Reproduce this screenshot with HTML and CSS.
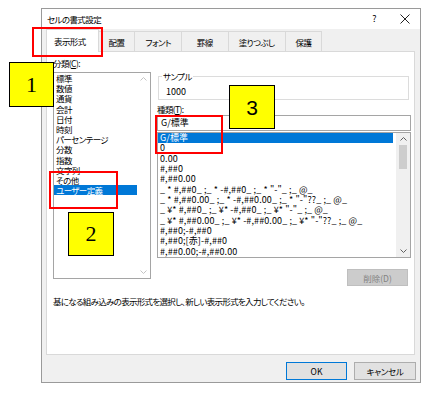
FILE: index.html
```html
<!DOCTYPE html>
<html lang="ja">
<head>
    <meta charset="UTF-8">
    <meta name="viewport" content="width=device-width, initial-scale=1.0">
    <title>セルの書式設定</title>
    <link rel="stylesheet" href="styles.css">
</head>
<body>
    <div class="dialog">
        <div class="titlebar">
            <span class="title">セルの書式設定</span>
            <span class="help">?</span>
            <span class="close">
                <svg width="10" height="10" viewBox="0 0 10 10"><path d="M0.5 0.5 L9.5 9.5 M9.5 0.5 L0.5 9.5" stroke="#222" stroke-width="1" fill="none"/></svg>
            </span>
        </div>

        <div class="tabs">
            <div class="tab active">表示形式</div>
            <div class="tab">配置</div>
            <div class="tab">フォント</div>
            <div class="tab tab-wide">罫線</div>
            <div class="tab">塗りつぶし</div>
            <div class="tab">保護</div>
        </div>

        <div class="panel">
            <div class="cols">
                <div class="col-left">
                    <div class="label">分類(<u>C</u>):</div>
                    <div class="listbox cat-list">
                        <ul class="items">
                            <li>標準</li>
                            <li>数値</li>
                            <li>通貨</li>
                            <li>会計</li>
                            <li>日付</li>
                            <li>時刻</li>
                            <li>パーセンテージ</li>
                            <li>分数</li>
                            <li>指数</li>
                            <li>文字列</li>
                            <li>その他</li>
                            <li class="selected">ユーザー定義</li>
                        </ul>
                        <div class="scroll scroll-off">
                            <div class="arrow"><svg width="7" height="4" viewBox="0 0 7 4"><path d="M0.5 3.5 L3.5 0.5 L6.5 3.5" stroke="#c4c4c4" fill="none"/></svg></div>
                            <div class="track"></div>
                            <div class="arrow"><svg width="7" height="4" viewBox="0 0 7 4"><path d="M0.5 0.5 L3.5 3.5 L6.5 0.5" stroke="#c4c4c4" fill="none"/></svg></div>
                        </div>
                    </div>
                </div>

                <div class="col-right">
                    <fieldset class="sample">
                        <legend>サンプル</legend>
                        <div class="sample-value">1000</div>
                    </fieldset>
                    <div class="label">種類(<u>T</u>):</div>
                    <div class="input">G/標準</div>
                    <div class="listbox fmt-list">
                        <ul class="items">
                            <li class="selected">G/標準</li>
                            <li>0</li>
                            <li>0.00</li>
                            <li>#,##0</li>
                            <li>#,##0.00</li>
                            <li>_ * #,##0_ ;_ * -#,##0_ ;_ * "-"_ ;_ @_</li>
                            <li>_ * #,##0.00_ ;_ * -#,##0.00_ ;_ * "-"??_ ;_ @_</li>
                            <li>_ ¥* #,##0_ ;_ ¥* -#,##0_ ;_ ¥* "-"_ ;_ @_</li>
                            <li>_ ¥* #,##0.00_ ;_ ¥* -#,##0.00_ ;_ ¥* "-"??_ ;_ @_</li>
                            <li>#,##0;-#,##0</li>
                            <li>#,##0;[赤]-#,##0</li>
                            <li>#,##0.00;-#,##0.00</li>
                        </ul>
                        <div class="scroll">
                            <div class="arrow"><svg width="7" height="4" viewBox="0 0 7 4"><path d="M0.5 3.5 L3.5 0.5 L6.5 3.5" stroke="#606060" fill="none"/></svg></div>
                            <div class="track"><div class="thumb"></div></div>
                            <div class="arrow"><svg width="7" height="4" viewBox="0 0 7 4"><path d="M0.5 0.5 L3.5 3.5 L6.5 0.5" stroke="#606060" fill="none"/></svg></div>
                        </div>
                    </div>
                    <div class="btn-row">
                        <button class="btn btn-delete" disabled>削除(D)</button>
                    </div>
                </div>
            </div>
            <p class="desc">基になる組み込みの表示形式を選択し、新しい表示形式を入力してください。</p>
        </div>

        <div class="footer">
            <button class="btn btn-ok">OK</button>
            <button class="btn btn-cancel">キャンセル</button>
        </div>
    </div>

    <!-- 注釈 -->
    <div class="mark mark-tab"></div>
    <div class="mark mark-user"></div>
    <div class="mark mark-type"></div>
    <div class="note note-1">1</div>
    <div class="note note-2">2</div>
    <div class="note note-3">3</div>
</body>
</html>
```

FILE: styles.css
```css
:root {
    --dialog-bg: #f0f0f0;
    --border-light: #d9d9d9;
    --border-field: #a5a5a5;
    --select-color: #0078d7;
    --mark-color: #ff0000;
    --note-color: #ffff00;
}

* {
    margin: 0;
    padding: 0;
    box-sizing: border-box;
}

body {
    position: relative;
    width: 431px;
    height: 397px;
    overflow: hidden;
    background: #ffffff;
    color: #000000;
    font-family: "Noto Sans CJK JP", sans-serif;
    font-size: 8.5px;
    font-feature-settings: "palt";
    letter-spacing: -0.6px;
    line-height: 12px;
}

.dialog {
    margin: 8px 0 0 41px;
    width: 380px;
    height: 375px;
    border: 1px solid #9a9a9a;
    background: var(--dialog-bg);
    display: flex;
    flex-direction: column;
}

.titlebar {
    height: 20px;
    background: #ffffff;
    display: flex;
    align-items: center;
    padding-left: 5px;
}

.title {
    flex: 1;
}

.help,
.close {
    height: 20px;
    display: flex;
    align-items: center;
    justify-content: center;
}

.help {
    width: 30px;
    font-size: 9px;
}

.close {
    width: 31px;
}

.tabs {
    height: 22px;
    display: flex;
    align-items: flex-end;
    padding-left: 4px;
}

.tab {
    height: 20px;
    padding: 0 10px;
    border: 1px solid var(--border-light);
    border-bottom: none;
    margin-left: -1px;
    display: flex;
    align-items: center;
    background: var(--dialog-bg);
}

.tab:first-child {
    margin-left: 0;
}

.tab.active {
    height: 23px;
    margin-bottom: -1px;
    padding: 0 12px 0 7px;
    background: #ffffff;
    position: relative;
    z-index: 1;
}

.tab-wide {
    padding: 0 15px;
}

.panel {
    height: 304px;
    margin: 0 5px 0 4px;
    border: 1px solid var(--border-light);
    background: #ffffff;
    padding: 5px 3px 0 6px;
}

.cols {
    display: grid;
    grid-template-columns: 98px 254px;
    column-gap: 6px;
    align-items: start;
}

.label {
    height: 12px;
}

.listbox {
    display: flex;
    border: 1px solid var(--border-field);
    background: #ffffff;
    overflow: hidden;
}

.items {
    list-style: none;
    flex: 1;
    min-width: 0;
}

.items li {
    white-space: nowrap;
    padding-left: 2px;
}

.items li.selected {
    background: var(--select-color);
    color: #ffffff;
}

.cat-list {
    margin-top: 3px;
    height: 207px;
}

.cat-list .items li {
    line-height: 10.2px;
}

.fmt-list {
    margin-top: 1px;
    height: 126px;
}

.fmt-list .items {
    margin-right: 3px;
    font-size: 9px;
    letter-spacing: 0.1px;
}

.fmt-list .items li {
    line-height: 10.35px;
}

.scroll {
    width: 14px;
    display: flex;
    flex-direction: column;
    background: var(--dialog-bg);
}

.scroll-off {
    width: 13px;
    background: #ffffff;
}

.arrow {
    height: 12px;
    display: flex;
    align-items: center;
    justify-content: center;
}

.track {
    flex: 1;
}

.thumb {
    margin: 0 3px;
    height: 24px;
    background: #cdcdcd;
}

.sample {
    margin-top: 13px;
    width: 251px;
    margin-left: 1px;
    border: 1px solid #dcdcdc;
    padding: 4px 0 1px 7px;
}

.sample legend {
    margin-left: -4px;
    padding: 0 1px;
}

.sample-value {
    line-height: 12px;
    font-size: 9px;
    letter-spacing: 0;
}

.col-right > .label {
    margin-top: 3px;
}

.input {
    height: 16px;
    border: 1px solid var(--border-field);
    padding-left: 3px;
    line-height: 14px;
    font-size: 9px;
    letter-spacing: 0;
}

.btn-row {
    display: flex;
    justify-content: flex-end;
    margin-top: 11px;
    padding-right: 3px;
}

.btn {
    font-family: inherit;
    font-size: 8.5px;
    font-feature-settings: "palt";
    letter-spacing: -0.3px;
    height: 17px;
    background: #e1e1e1;
    border: 1px solid #adadad;
    color: #000000;
}

.btn-delete {
    width: 61px;
    background: #cccccc;
    border-color: #bfbfbf;
    color: #838383;
    letter-spacing: 0;
}

.desc {
    margin-top: 9px;
    letter-spacing: -0.7px;
}

.footer {
    display: flex;
    justify-content: flex-end;
    gap: 7px;
    padding: 7px 4px 0 0;
}

.btn-ok {
    width: 61px;
    height: 18px;
    border-color: var(--select-color);
    letter-spacing: 0;
}

.btn-cancel {
    width: 62px;
    height: 18px;
}

/* 注釈 */
.mark {
    position: absolute;
    border: 2px solid var(--mark-color);
}

.mark-tab {
    left: 32px;
    top: 27px;
    width: 71px;
    height: 30px;
}

.mark-user {
    left: 49px;
    top: 171px;
    width: 69px;
    height: 38px;
}

.mark-type {
    left: 155px;
    top: 115px;
    width: 68px;
    height: 39px;
}

.note {
    position: absolute;
    border: 1px solid #000000;
    background: var(--note-color);
    display: flex;
    align-items: center;
    justify-content: center;
    font-family: "Liberation Serif", serif;
    font-size: 22px;
    font-feature-settings: normal;
    letter-spacing: 0;
    line-height: 1;
}

.note-1 {
    left: 9px;
    top: 62px;
    width: 45px;
    height: 45px;
}

.note-2 {
    left: 68px;
    top: 212px;
    width: 46px;
    height: 44px;
}

.note-3 {
    left: 229px;
    top: 85px;
    width: 46px;
    height: 44px;
    font-family: "Liberation Sans", sans-serif;
    font-size: 21px;
}
```
